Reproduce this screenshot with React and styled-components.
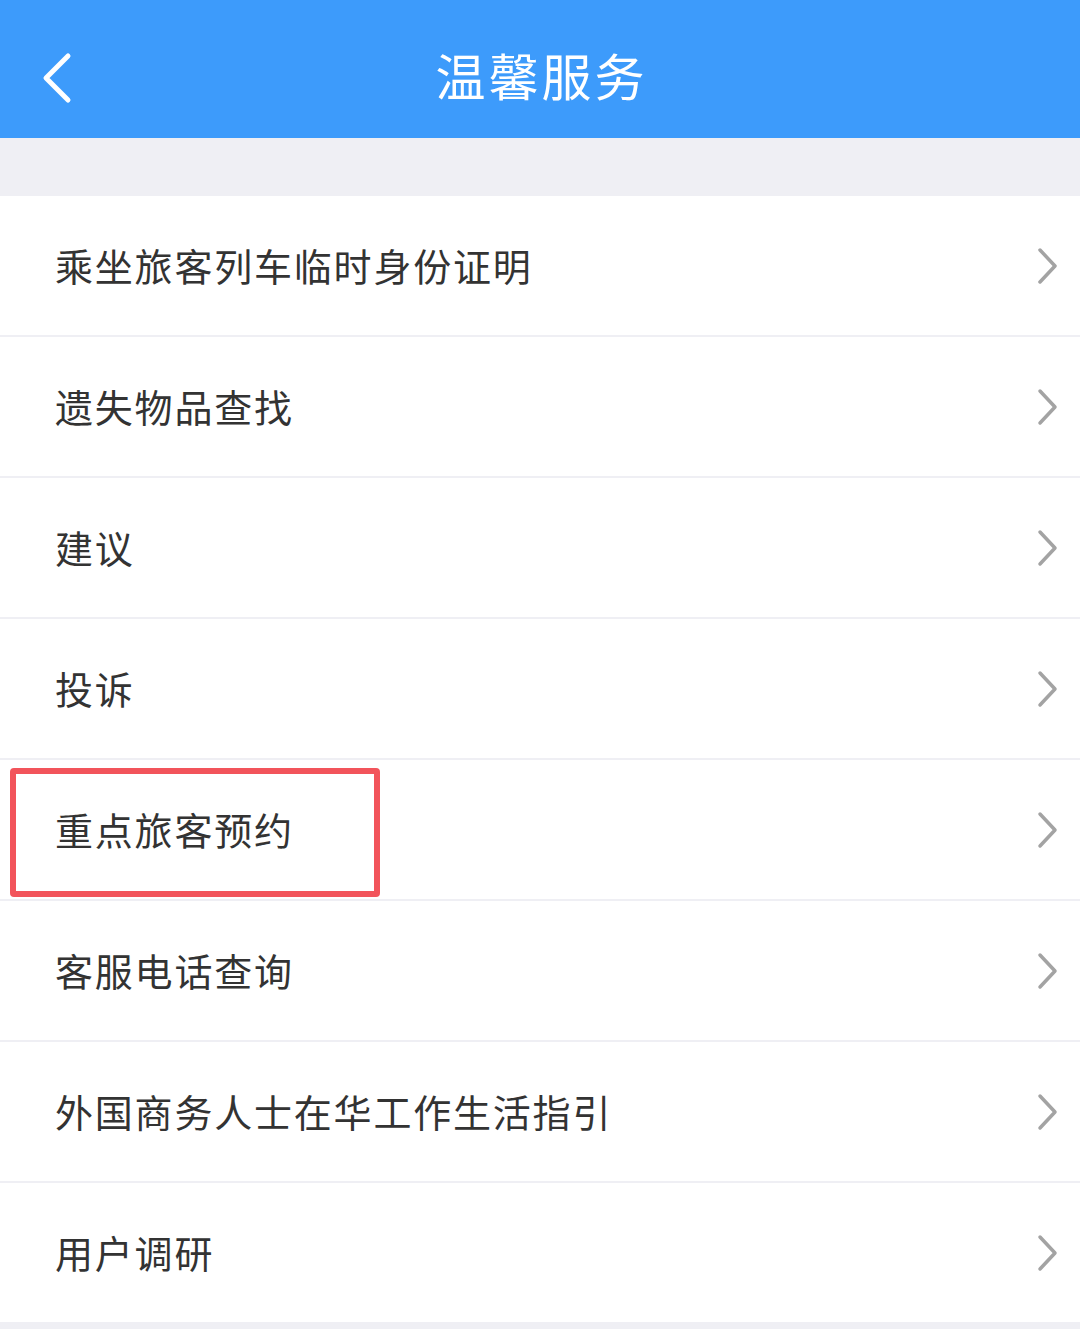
import React from 'react';
import styled, { createGlobalStyle } from 'styled-components';

const GlobalStyle = createGlobalStyle`
  html, body {
    margin: 0;
    padding: 0;
    background: #efeff4;
    font-family: "Noto Sans CJK SC", "Noto Sans", sans-serif;
  }
`

const Page = styled.div`
  width: 1080px;
  min-height: 1329px;
  background: #efeff4;
`

const Header = styled.div`
  height: 138px;
  background: #3d9bfb;
  display: flex;
  align-items: center;
  justify-content: center;
  position: relative;
`

const BackButton = styled.div`
  position: absolute;
  left: 36px;
  top: 50px;
  width: 40px;
  height: 56px;
  display: flex;
  align-items: center;
  justify-content: center;
`

const Title = styled.h1`
  margin: 0;
  color: #ffffff;
  font-size: 50px;
  font-weight: 400;
  letter-spacing: 3px;
  line-height: 1;
  padding-top: 10px;
  padding-left: 3px;
`

const Gap = styled.div`
  height: 58px;
`

const List = styled.div`
  display: flex;
  flex-direction: column;
  gap: 2px;
`

const Row = styled.div`
  height: 139px;
  background: #ffffff;
  display: flex;
  align-items: center;
  justify-content: space-between;
  padding: 0 20px 0 55px;
  position: relative;
`

const Label = styled.span`
  font-size: 38px;
  color: #333333;
  letter-spacing: 1.8px;
  margin-top: -3px;
`

const Highlight = styled.div`
  position: absolute;
  left: 10px;
  top: 8px;
  width: 358px;
  height: 117px;
  border: 6px solid #f2545b;
  border-radius: 4px;
`

const Chevron = () => (
  <svg width="24" height="40" viewBox="0 0 24 40">
    <path d="M4 4 L19 20 L4 36" fill="none" stroke="#a3a3a3" strokeWidth="3.5" strokeLinecap="round" strokeLinejoin="round" />
  </svg>
)

const items = [
  '乘坐旅客列车临时身份证明',
  '遗失物品查找',
  '建议',
  '投诉',
  '重点旅客预约',
  '客服电话查询',
  '外国商务人士在华工作生活指引',
  '用户调研',
]

const App = () => {
  return (
    <>
      <GlobalStyle />
      <Page>
        <Header>
          <BackButton>
            <svg width="36" height="52" viewBox="0 0 36 52">
              <path d="M30 4 L8 26 L30 48" fill="none" stroke="#ffffff" strokeWidth="5" strokeLinecap="round" strokeLinejoin="round" />
            </svg>
          </BackButton>
          <Title>温馨服务</Title>
        </Header>
        <Gap />
        <List>
          {items.map((item) => (
            <Row key={item}>
              <Label>{item}</Label>
              <Chevron />
              {item === '重点旅客预约' && <Highlight />}
            </Row>
          ))}
        </List>
      </Page>
    </>
  )
}

export default App
